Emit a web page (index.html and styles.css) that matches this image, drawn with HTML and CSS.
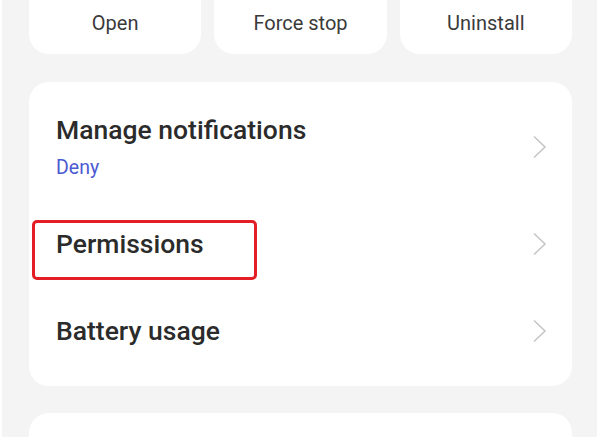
FILE: index.html
```html
<!DOCTYPE html>
<html lang="en">
<head>
<meta charset="utf-8">
<title>App info</title>
<link rel="stylesheet" href="styles.css">
</head>
<body>
<div class="page">
  <div class="actions">
    <div class="action"><span>Open</span></div>
    <div class="action"><span>Force stop</span></div>
    <div class="action"><span>Uninstall</span></div>
  </div>

  <div class="card">
    <div class="row row-first">
      <div class="row-text">
        <div class="title">Manage notifications</div>
        <div class="sub">Deny</div>
      </div>
      <svg class="chev" width="16" height="24" viewBox="0 0 16 24"><path d="M2 1.5 L13 12 L2 22.5" fill="none" stroke="#c6c6c6" stroke-width="1.6"/></svg>
    </div>
    <div class="row">
      <div class="row-text">
        <div class="title">Permissions</div>
      </div>
      <svg class="chev" width="16" height="24" viewBox="0 0 16 24"><path d="M2 1.5 L13 12 L2 22.5" fill="none" stroke="#c6c6c6" stroke-width="1.6"/></svg>
      <div class="highlight"></div>
    </div>
    <div class="row">
      <div class="row-text">
        <div class="title">Battery usage</div>
      </div>
      <svg class="chev" width="16" height="24" viewBox="0 0 16 24"><path d="M2 1.5 L13 12 L2 22.5" fill="none" stroke="#c6c6c6" stroke-width="1.6"/></svg>
    </div>
  </div>

  <div class="card card-next"></div>
</div>
</body>
</html>
```

FILE: styles.css
```css
html, body {
  margin: 0;
  padding: 0;
  background: #f4f4f4;
  height: 100%;
  overflow: hidden;
}

body {
  font-family: Roboto, "Noto Sans", "Liberation Sans", sans-serif;
}

.page {
  border-left: 2px solid #ffffff;
  padding: 0 25px 0 27px;
  height: 100%;
  box-sizing: border-box;
  overflow: hidden;
}

.actions {
  display: grid;
  grid-template-columns: repeat(3, 1fr);
  gap: 13px;
  margin-top: -26px;
}

.action {
  background: #ffffff;
  border-radius: 20px;
  height: 80px;
  display: flex;
  align-items: flex-end;
  justify-content: center;
  padding-bottom: 19px;
  box-sizing: border-box;
  font-size: 20px;
  line-height: 24px;
  color: #3a3a3a;
}

.card {
  background: #ffffff;
  border-radius: 20px;
  margin-top: 28px;
  padding: 12px 0;
}

.row {
  position: relative;
  display: flex;
  align-items: center;
  height: 87px;
  padding: 0 24px 0 27px;
}

.row-first {
  height: 106px;
}

.row-text {
  flex: 1;
}

.title {
  font-size: 26.5px;
  line-height: 30px;
  font-weight: 500;
  color: #2b2b2b;
}

.sub {
  margin-top: 11px;
  font-size: 19.5px;
  line-height: 24px;
  color: #4a5ad2;
}

.chev {
  display: block;
  flex: none;
}

.highlight {
  position: absolute;
  left: 3px;
  top: 20px;
  width: 225px;
  height: 60px;
  border: 3px solid #e31e24;
  border-radius: 5px;
  box-sizing: border-box;
}

.card-next {
  margin-top: 27px;
  height: 25px;
  padding: 0;
  border-radius: 20px 20px 0 0;
}
```
